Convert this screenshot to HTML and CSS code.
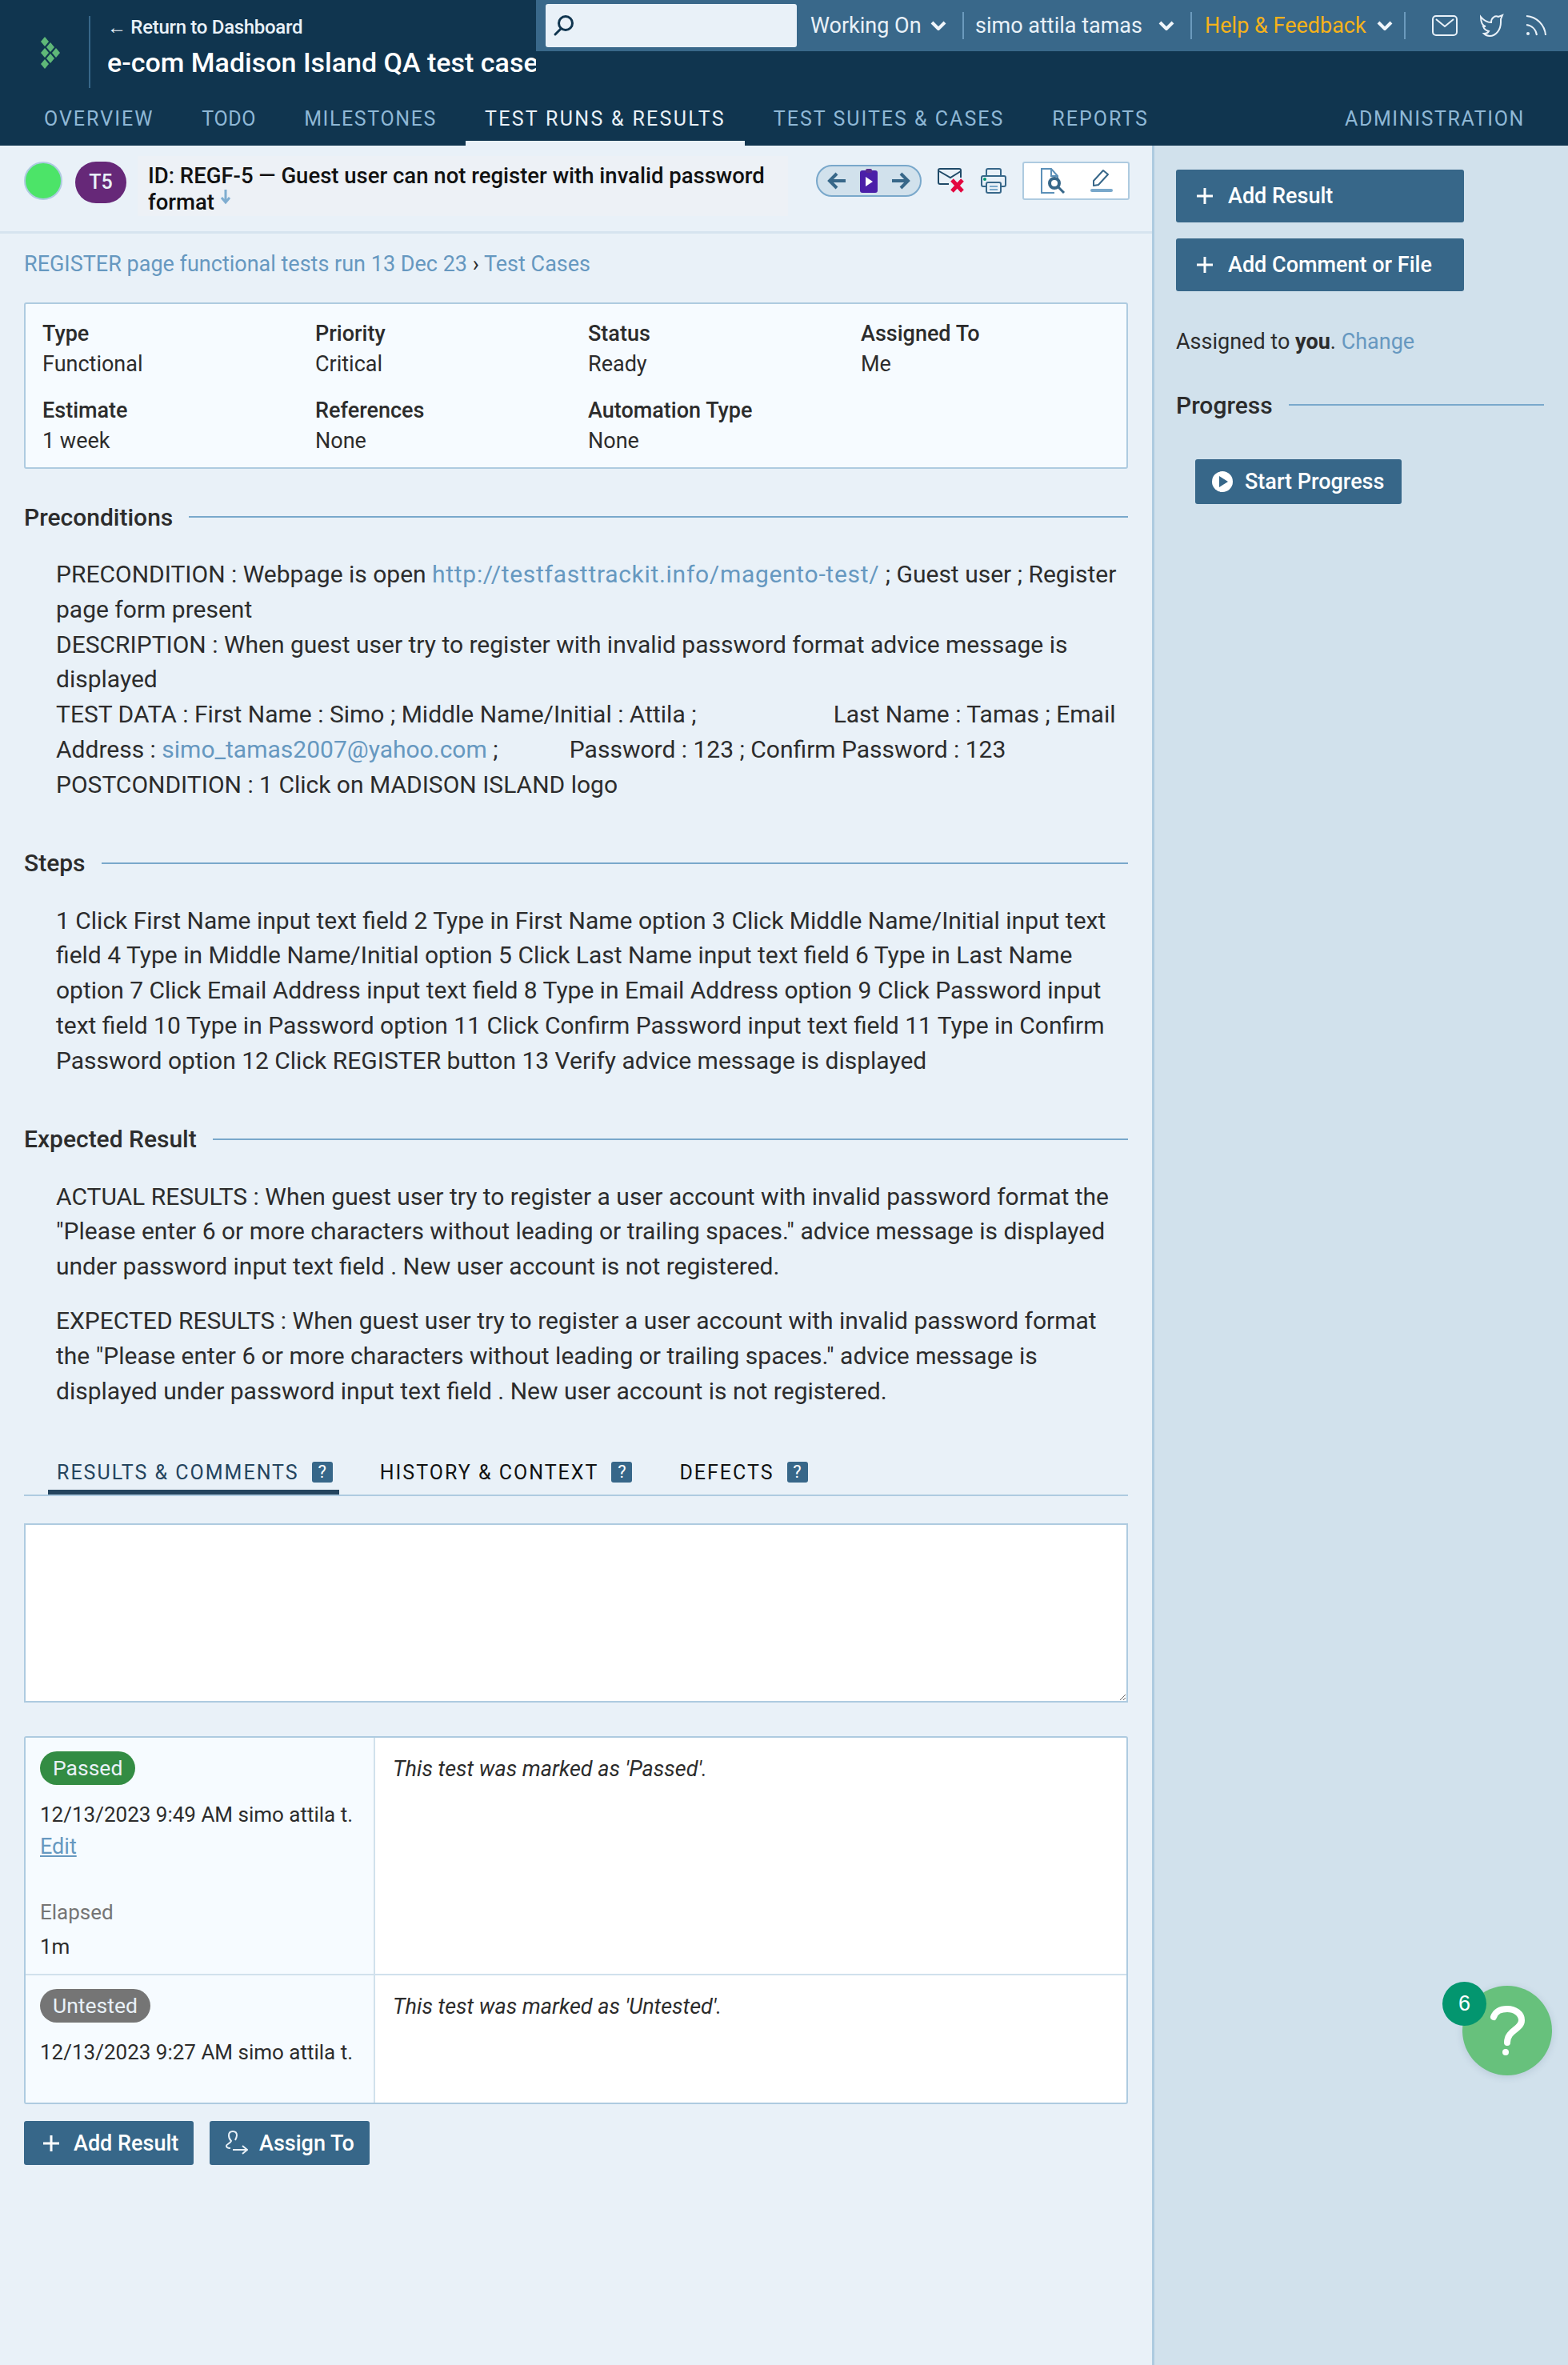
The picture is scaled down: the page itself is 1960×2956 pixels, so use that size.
FILE: index.html
```html
<!DOCTYPE html>
<html lang="en">
<head>
  <meta charset="UTF-8">
  <title>REGF-5 - e-com Madison Island QA test cases</title>
  <link rel="stylesheet" href="styles.css">
</head>
<body>
  <header class="header">
    <div class="header-top">
      <div class="brand">
        <svg class="logo" width="28" height="40" viewBox="0 0 28 40">
          <g fill="#5fb878">
            <path d="M6 0l5 6-5 6-5-6z"/><path d="M6 14l5 6-5 6-5-6z"/><path d="M6 28l5 6-5 6-5-6z"/>
            <path d="M13 7l5 6-5 6-5-6z"/><path d="M13 21l5 6-5 6-5-6z"/><path d="M20 14l5 6-5 6-5-6z"/>
          </g>
        </svg>
        <div class="brand-text">
          <a class="back-link">← Return to Dashboard</a>
          <div class="project-name">e-com Madison Island QA test cases</div>
        </div>
      </div>
      <div class="topbar">
        <div class="search">
          <svg width="30" height="30" viewBox="0 0 30 30" fill="none" stroke="#10354f" stroke-width="3"><circle cx="17" cy="12" r="8.5"/><path d="M11 19l-7 7" stroke-linecap="round"/></svg>
        </div>
        <div class="topbar-item item-working">Working On <svg class="chev" viewBox="0 0 20 12"><path d="M2 2l8 8 8-8"/></svg></div>
        <div class="topbar-item item-user">simo attila tamas <svg class="chev" viewBox="0 0 20 12"><path d="M2 2l8 8 8-8"/></svg></div>
        <div class="topbar-item item-help"><span class="help-text">Help &amp; Feedback</span> <svg class="chev" viewBox="0 0 20 12"><path d="M2 2l8 8 8-8"/></svg></div>
        <div class="topbar-icons">
          <svg width="32" height="26" viewBox="0 0 32 26" fill="none" stroke="#e9f1f8" stroke-width="2"><rect x="1" y="1" width="30" height="24" rx="4"/><path d="M5 5l11 9 11-9"/></svg>
          <svg width="32" height="30" viewBox="0 0 32 30" fill="none" stroke="#e9f1f8" stroke-width="2"><path d="M3 4c4 5 8 7 13 7 0-6 5-9 9-7l5-2-2 5v4c0 9-6 17-14 17-3 0-5-1-7-3 3 0 5-1 6-3-4-1-6-3-7-6h3C5 15 3 10 3 4z"/></svg>
          <svg width="28" height="28" viewBox="0 0 28 28" fill="none" stroke="#e9f1f8" stroke-width="2"><path d="M2 2c13 1 23 11 24 24M2 13c7 1 12 6 13 13"/><circle cx="4" cy="24" r="2" fill="#e9f1f8" stroke="none"/></svg>
        </div>
      </div>
    </div>
    <nav class="nav">
      <a class="nav-tab">Overview</a>
      <a class="nav-tab tab-todo">Todo</a>
      <a class="nav-tab tab-milestones">Milestones</a>
      <a class="nav-tab active">Test Runs &amp; Results</a>
      <a class="nav-tab">Test Suites &amp; Cases</a>
      <a class="nav-tab">Reports</a>
      <a class="nav-tab nav-admin">Administration</a>
    </nav>
  </header>

  <div class="page">
    <main class="main">
      <div class="case-head">
        <span class="status-dot"></span>
        <span class="type-badge">T5</span>
        <div class="case-title">ID: REGF-5 — Guest user can not register with invalid password format <svg class="down-arrow" width="14" height="20" viewBox="0 0 14 20" fill="none" stroke="#7fadd0" stroke-width="3"><path d="M7 1v16M2 11l5 6 5-6"/></svg></div>
        <div class="case-tools">
          <div class="pager">
            <svg width="24" height="22" viewBox="0 0 24 22" fill="none" stroke="#376789" stroke-width="4"><path d="M23 11H4M12 2l-9 9 9 9"/></svg>
            <svg width="22" height="30" viewBox="0 0 22 30"><rect y="2" width="22" height="28" rx="3" fill="#4b1fa8"/><rect x="7" width="8" height="5" rx="2" fill="#5a2a90"/><path d="M7 10l9 6-9 6z" fill="#fff"/></svg>
            <svg width="24" height="22" viewBox="0 0 24 22" fill="none" stroke="#376789" stroke-width="4"><path d="M1 11h19M12 2l9 9-9 9"/></svg>
          </div>
          <svg class="tool-icon" width="34" height="32" viewBox="0 0 34 32" fill="none"><path d="M14 20H3a2 2 0 0 1-2-2V3a2 2 0 0 1 2-2h24a2 2 0 0 1 2 2v9" stroke="#1f4a68" stroke-width="2"/><path d="M2 4l14 8 13-8" stroke="#1f4a68" stroke-width="2"/><path d="M18 15l13 14M31 15L18 29" stroke="#e3063f" stroke-width="5"/></svg>
          <svg class="tool-icon" width="32" height="32" viewBox="0 0 32 32" fill="none" stroke="#376789" stroke-width="2"><path d="M7 10V3a2 2 0 0 1 2-2h14a2 2 0 0 1 2 2v7"/><path d="M6 23H3a2 2 0 0 1-2-2V12a2 2 0 0 1 2-2h26a2 2 0 0 1 2 2v9a2 2 0 0 1-2 2h-3"/><rect x="7" y="18" width="18" height="13" rx="2"/><path d="M11 23h10M11 27h10" stroke="#79a8cb"/><circle cx="5" cy="14" r="2" fill="#03966f" stroke="none"/></svg>
          <div class="view-toggle">
            <svg width="32" height="32" viewBox="0 0 32 32" fill="none"><path d="M18 31H2V1h12l8 9v3M14 1v9h8" stroke="#5c90b8" stroke-width="2"/><circle cx="18" cy="19" r="6" stroke="#376789" stroke-width="4"/><path d="M23 24l7 7" stroke="#376789" stroke-width="3"/></svg>
            <svg width="30" height="30" viewBox="0 0 30 30" fill="none"><path d="M5 21v-6L17 2l6 5-12 13z" stroke="#376789" stroke-width="2" stroke-linejoin="round"/><rect x="1" y="25" width="28" height="4" rx="2" fill="#79a8cb"/></svg>
          </div>
        </div>
      </div>

      <div class="content">
        <div class="crumbs"><a class="link">REGISTER page functional tests run 13 Dec 23</a> › <a class="link">Test Cases</a></div>

        <div class="fields">
          <div class="field"><div class="field-label">Type</div><div>Functional</div></div>
          <div class="field"><div class="field-label">Priority</div><div>Critical</div></div>
          <div class="field"><div class="field-label">Status</div><div>Ready</div></div>
          <div class="field"><div class="field-label">Assigned To</div><div>Me</div></div>
          <div class="field"><div class="field-label">Estimate</div><div>1 week</div></div>
          <div class="field"><div class="field-label">References</div><div>None</div></div>
          <div class="field"><div class="field-label">Automation Type</div><div>None</div></div>
        </div>

        <h3 class="section-title first">Preconditions</h3>
        <div class="section-text">
          PRECONDITION : Webpage is open <a class="link url-link">http://testfasttrackit.info/magento-test/</a> ; Guest user ; Register<br>
          page form present<br>
          DESCRIPTION : When guest user try to register with invalid password format advice message is<br>
          displayed<br>
          TEST DATA : First Name : Simo ; Middle Name/Initial : Attila ;&nbsp;&nbsp;&nbsp;&nbsp;&nbsp;&nbsp;&nbsp;&nbsp;&nbsp;&nbsp;&nbsp;&nbsp;&nbsp;&nbsp;&nbsp;&nbsp;&nbsp;&nbsp;&nbsp;&nbsp;&nbsp;&nbsp;&nbsp;Last Name : Tamas ; Email<br>
          Address : <a class="link">simo_tamas2007@yahoo.com</a> ;&nbsp;&nbsp;&nbsp;&nbsp;&nbsp;&nbsp;&nbsp;&nbsp;&nbsp;&nbsp;&nbsp;&nbsp;Password : 123 ; Confirm Password : 123<br>
          POSTCONDITION : 1 Click on MADISON ISLAND logo
        </div>

        <h3 class="section-title">Steps</h3>
        <div class="section-text">
          1 Click First Name input text field 2 Type in First Name option 3 Click Middle Name/Initial input text<br>
          field 4 Type in Middle Name/Initial option 5 Click Last Name input text field 6 Type in Last Name<br>
          option 7 Click Email Address input text field 8 Type in Email Address option 9 Click Password input<br>
          text field 10 Type in Password option 11 Click Confirm Password input text field 11 Type in Confirm<br>
          Password option 12 Click REGISTER button 13 Verify advice message is displayed
        </div>

        <h3 class="section-title">Expected Result</h3>
        <div class="section-text">
          <p>ACTUAL RESULTS : When guest user try to register a user account with invalid password format the<br>
          "Please enter 6 or more characters without leading or trailing spaces." advice message is displayed<br>
          under password input text field . New user account is not registered.</p>
          <p>EXPECTED RESULTS : When guest user try to register a user account with invalid password format<br>
          the "Please enter 6 or more characters without leading or trailing spaces." advice message is<br>
          displayed under password input text field . New user account is not registered.</p>
        </div>

        <div class="tabs">
          <a class="tab active">Results &amp; Comments <span class="help-chip">?</span></a>
          <a class="tab">History &amp; Context <span class="help-chip">?</span></a>
          <a class="tab">Defects <span class="help-chip">?</span></a>
        </div>

        <textarea class="comment-box"></textarea>

        <div class="results">
          <div class="result-row row-passed">
            <div class="result-meta">
              <span class="result-badge passed">Passed</span>
              <div class="result-date">12/13/2023 9:49 AM simo attila t.</div>
              <a class="link edit-link">Edit</a>
              <div class="elapsed-label">Elapsed</div>
              <div class="elapsed-value">1m</div>
            </div>
            <div class="result-comment">This test was marked as 'Passed'.</div>
          </div>
          <div class="result-row row-untested">
            <div class="result-meta">
              <span class="result-badge untested">Untested</span>
              <div class="result-date">12/13/2023 9:27 AM simo attila t.</div>
            </div>
            <div class="result-comment">This test was marked as 'Untested'.</div>
          </div>
        </div>

        <div class="result-actions">
          <a class="btn btn-small"><svg class="plus" viewBox="0 0 20 20"><path d="M10 0v20M0 10h20"/></svg>Add Result</a>
          <a class="btn btn-small btn-assign"><svg width="28" height="32" viewBox="0 0 28 32" fill="none" stroke="#e9f1f8" stroke-width="2"><path d="M6 22c-3 0-5-1-5-3s5-3 6-6c-2-2-3-4-3-7s2-5 5-5 5 2 5 5c0 2-1 4-2 6"/><path d="M9 24h17M21 19l6 5-6 5"/></svg>Assign To</a>
        </div>
      </div>
    </main>

    <aside class="sidebar">
      <a class="btn btn-side"><svg class="plus" viewBox="0 0 20 20"><path d="M10 0v20M0 10h20"/></svg>Add Result</a>
      <a class="btn btn-side"><svg class="plus" viewBox="0 0 20 20"><path d="M10 0v20M0 10h20"/></svg>Add Comment or File</a>
      <div class="assigned">Assigned to <b>you</b>. <a class="link">Change</a></div>
      <h3 class="section-title side-title">Progress</h3>
      <a class="btn btn-start"><svg width="28" height="28" viewBox="0 0 28 28"><circle cx="14" cy="14" r="13" fill="#fff"/><path d="M10 7l11 7-11 7z" fill="#376789"/></svg>Start Progress</a>
    </aside>
  </div>

  <div class="help-fab">
    <span class="fab-count">6</span>
    <svg width="44" height="62" viewBox="0 0 44 62" fill="none" stroke="#fff" stroke-width="8" stroke-linecap="round"><path d="M5 14C8 6 14 4 22 4c10 0 18 6 18 14 0 12-18 12-18 28"/><circle cx="20" cy="58" r="4" fill="#fff" stroke="none"/></svg>
  </div>
</body>
</html>
```

FILE: styles.css
```css
* {
  box-sizing: border-box;
}
body {
  margin: 0;
  height: 2956px;
  overflow: hidden;
  font-family: 'Roboto', sans-serif;
  font-size: 28px;
  color: #2c2c2c;
  background: #e9f1f8;
}
a {
  text-decoration: none;
}
.link {
  color: #6698c0;
}

/* header */
.header {
  background: #10354f;
  height: 182px;
  color: #e9f1f8;
}
.header-top {
  display: flex;
  height: 120px;
}
.brand {
  width: 670px;
  height: 120px;
  overflow: hidden;
  display: flex;
  flex-shrink: 0;
  padding: 20px 0 0 50px;
}
.logo {
  margin-top: 26px;
  flex-shrink: 0;
}
.brand-text {
  flex-shrink: 0;
  margin-left: 33px;
  padding-left: 21px;
  border-left: 2px solid #376789;
  height: 90px;
  white-space: nowrap;
}
.back-link {
  display: block;
  font-size: 24px;
  font-weight: 500;
  line-height: 28px;
  letter-spacing: -0.3px;
}
.project-name {
  color: #fff;
  font-size: 34px;
  font-weight: 500;
  line-height: 44px;
  margin-top: 8px;
}
.topbar {
  flex: 1;
  height: 64px;
  background: #39688a;
  display: flex;
  align-items: center;
  padding-left: 12px;
  font-size: 27px;
}
.search {
  width: 314px;
  height: 54px;
  background: #e9f1f8;
  border-radius: 3px;
  display: flex;
  align-items: center;
  padding-left: 8px;
  margin-right: 17px;
}
.topbar-item {
  display: flex;
  align-items: center;
  height: 34px;
  white-space: nowrap;
  border-right: 2px solid #6b9abd;
}
.item-working {
  width: 192px;
}
.item-user {
  width: 285px;
  padding-left: 14px;
}
.item-help {
  width: 267px;
  padding-left: 16px;
}
.help-text {
  color: #f5b21a;
}
.chev {
  width: 20px;
  height: 12px;
  margin-left: auto;
  margin-right: 20px;
  fill: none;
  stroke: #f0f5fa;
  stroke-width: 4;
}
.item-help .chev {
  margin-right: 14px;
}
.topbar-icons {
  display: flex;
  align-items: center;
  gap: 26px;
  padding-left: 33px;
}
.nav {
  display: flex;
  height: 62px;
  padding: 0 30px 0 31px;
}
.nav-tab {
  padding: 0 24px;
  margin-right: 12px;
  height: 62px;
  line-height: 58px;
  font-size: 25px;
  letter-spacing: 2px;
  text-transform: uppercase;
  white-space: nowrap;
  color: #8fb8d6;
}
.tab-todo {
  letter-spacing: 0.6px;
}
.tab-milestones {
  letter-spacing: 1.6px;
}
.nav-tab.active {
  letter-spacing: 2.3px;
  color: #e9f1f8;
  border-bottom: 6px solid #e9f1f8;
}
.nav-admin {
  margin-left: auto;
  margin-right: 0;
  letter-spacing: 1.6px;
}

/* page */
.page {
  display: flex;
  height: 2774px;
}
.main {
  width: 1440px;
  flex-shrink: 0;
}
.case-head {
  display: flex;
  height: 110px;
  padding: 20px 30px 0 30px;
  border-bottom: 3px solid #d6e4ef;
  position: relative;
}
.status-dot {
  width: 48px;
  height: 48px;
  border-radius: 50%;
  background: #4ce468;
  border: 2px solid #aecbe0;
  flex-shrink: 0;
}
.type-badge {
  width: 64px;
  height: 52px;
  border-radius: 26px;
  background: #662878;
  color: #e9f1f8;
  font-size: 25px;
  font-weight: 500;
  text-align: center;
  line-height: 52px;
  margin-left: 16px;
  flex-shrink: 0;
}
.case-title {
  width: 813px;
  height: 75px;
  margin: -7px 0 0 14px;
  padding: 9px 0 0 13px;
  background: #edf1f6;
  font-size: 27.5px;
  font-weight: 500;
  line-height: 32px;
  color: #111;
}
.down-arrow {
  vertical-align: 6px;
}
.case-tools {
  position: absolute;
  left: 1020px;
  top: 20px;
  display: flex;
  align-items: center;
}
.pager {
  width: 132px;
  height: 40px;
  border-radius: 20px;
  border: 2px solid #79a8cb;
  background: #d1e1ec;
  display: flex;
  align-items: center;
  justify-content: space-between;
  padding: 0 12px;
}
.tool-icon {
  margin-left: 20px;
}
.view-toggle {
  width: 134px;
  height: 48px;
  margin-left: 20px;
  background: #fff;
  border: 2px solid #aecbe0;
  border-radius: 3px;
  display: flex;
  align-items: center;
  justify-content: space-between;
  padding: 0 18px 0 20px;
}
.content {
  padding: 0 30px;
}
.crumbs {
  font-size: 27px;
  line-height: 34px;
  margin-top: 21px;
}
.fields {
  display: grid;
  grid-template-columns: repeat(4, 341px);
  height: 208px;
  margin-top: 31px;
  padding: 18px 21px 0;
  background: #f6fbff;
  border: 2px solid #aecbe0;
  border-radius: 3px;
  font-size: 27px;
  line-height: 38px;
}
.field {
  height: 96px;
}
.field-label {
  font-weight: 500;
  color: #2c2c2c;
}
.section-title {
  display: flex;
  align-items: center;
  margin: 58px 0 0;
  height: 36px;
  font-size: 30px;
  font-weight: 500;
  color: #2c2c2c;
  white-space: nowrap;
}
.section-title.first {
  margin-top: 42px;
}
.section-title::after {
  content: "";
  flex: 1;
  height: 2px;
  margin-left: 20px;
  background: #79a8cb;
}
.section-text {
  padding-left: 40px;
  margin-top: 32px;
  font-size: 30px;
  line-height: 43.8px;
  white-space: nowrap;
}
.url-link {
  letter-spacing: 0.7px;
}
.section-text p {
  margin: 0 0 24px;
}
.tabs {
  display: flex;
  height: 58px;
  margin-top: 52px;
  padding-left: 30px;
  border-bottom: 2px solid #aecbe0;
}
.tab {
  display: flex;
  align-items: center;
  padding: 6px 8px 0 11px;
  height: 56px;
  margin-right: 40px;
  font-size: 25px;
  letter-spacing: 2px;
  text-transform: uppercase;
  color: #111;
  border-bottom: 6px solid transparent;
}
.tab.active {
  color: #24445e;
  border-bottom-color: #24445e;
}
.help-chip {
  width: 26px;
  height: 26px;
  margin-left: 16px;
  border-radius: 3px;
  background: #376789;
  color: #fff;
  font-size: 22px;
  text-align: center;
  line-height: 26px;
  letter-spacing: 0;
}
.comment-box {
  display: block;
  width: 100%;
  height: 224px;
  margin-top: 34px;
  border: 2px solid #aecbe0;
  background: #fff;
}
.results {
  margin-top: 42px;
  border: 2px solid #aecbe0;
  border-radius: 3px;
  background: #fff;
}
.result-row {
  display: flex;
}
.row-passed {
  height: 297px;
  border-bottom: 2px solid #d1e1ec;
}
.row-untested {
  height: 159px;
}
.result-meta {
  width: 437px;
  padding: 17px 18px 0;
  background: #f6fbff;
  border-right: 2px solid #d1e1ec;
  font-size: 26px;
  white-space: nowrap;
}
.result-badge {
  display: inline-block;
  height: 42px;
  padding: 0 16px;
  border-radius: 21px;
  color: #e9f1f8;
  font-size: 26.5px;
  line-height: 42px;
}
.passed {
  background: #338c43;
}
.untested {
  background: #757575;
}
.result-date {
  margin-top: 17px;
  line-height: 40px;
}
.edit-link {
  display: block;
  width: fit-content;
  font-size: 27px;
  line-height: 34px;
  margin-top: 3px;
  text-decoration: underline;
}
.elapsed-label {
  margin-top: 48px;
  line-height: 34px;
  color: #757575;
}
.elapsed-value {
  margin-top: 9px;
  line-height: 34px;
}
.result-comment {
  flex: 1;
  padding: 22px 22px 0;
  font-size: 27px;
  font-style: italic;
  line-height: 34px;
}
.result-actions {
  display: flex;
  gap: 20px;
  margin-top: 21px;
}

/* buttons */
.btn {
  display: flex;
  align-items: center;
  background: #376789;
  color: #fff;
  border-radius: 3px;
  font-weight: 500;
  white-space: nowrap;
  font-size: 27px;
}
.plus {
  width: 20px;
  height: 20px;
  stroke: #fff;
  stroke-width: 3;
  fill: none;
  flex-shrink: 0;
}
.btn-small {
  height: 55px;
  width: 212px;
  padding-left: 24px;
}
.btn-small .plus {
  margin-right: 18px;
}
.btn-assign {
  width: 200px;
  padding-left: 20px;
}
.btn-assign svg {
  margin-right: 14px;
}

/* sidebar */
.sidebar {
  flex: 1;
  background: #d1e1ec;
  border-left: 3px solid #aecbe0;
  padding: 30px 30px 0 27px;
}
.btn-side {
  width: 360px;
  height: 66px;
  padding-left: 26px;
  margin-bottom: 20px;
}
.btn-side .plus {
  margin-right: 19px;
}
.assigned {
  margin-top: 46px;
  font-size: 27px;
  line-height: 34px;
}
.side-title {
  margin-top: 44px;
}
.btn-start {
  width: 258px;
  height: 56px;
  margin: 50px 0 0 24px;
  padding-left: 20px;
}
.btn-start svg {
  margin-right: 14px;
}

/* floating help */
.help-fab {
  position: absolute;
  left: 1828px;
  top: 2482px;
  width: 112px;
  height: 112px;
  border-radius: 50%;
  background: #67c17c;
  box-shadow: 0 2px 10px rgba(40, 70, 100, 0.15);
  display: flex;
  align-items: center;
  justify-content: center;
}
.fab-count {
  position: absolute;
  left: -25px;
  top: -5px;
  width: 55px;
  height: 55px;
  border-radius: 50%;
  background: #03966f;
  color: #fff;
  font-family: 'Liberation Sans', sans-serif;
  font-size: 27px;
  text-align: center;
  line-height: 55px;
}
```
